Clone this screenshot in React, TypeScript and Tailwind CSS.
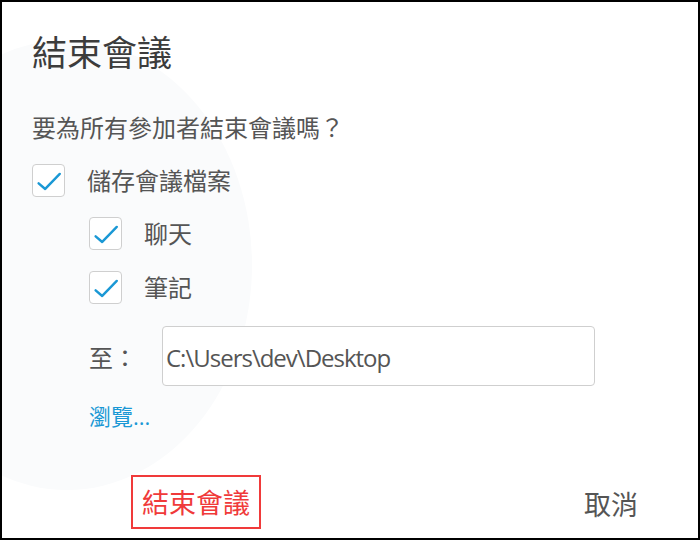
import { useState } from "react";

function Check({ checked, onToggle }: { checked: boolean; onToggle: () => void }) {
  return (
    <button
      onClick={onToggle}
      className="w-[33px] h-[33px] shrink-0 rounded-[4px] border-[1.5px] border-[#cfcfcf] bg-white flex items-center justify-center"
    >
      {checked && (
        <svg width="33" height="33" viewBox="0 0 33 33">
          <path
            d="M6 19.5 L13 25.5 L28.5 9.5"
            fill="none"
            stroke="#1a98d5"
            strokeWidth="2.6"
            strokeLinecap="round"
            strokeLinejoin="round"
          />
        </svg>
      )}
    </button>
  );
}

export default function App() {
  const [saveFiles, setSaveFiles] = useState(true);
  const [chat, setChat] = useState(true);
  const [notes, setNotes] = useState(true);
  const [path, setPath] = useState("C:\\Users\\dev\\Desktop");

  const font = "font-['Open_Sans','Noto_Sans_CJK_TC',sans-serif]";

  return (
    <div
      className={`relative w-[700px] h-[540px] overflow-hidden border-2 border-black bg-white text-[#555] ${font}`}
    >
      {/* faint background watermark */}
      <div className="absolute left-[-120px] top-[38px] w-[370px] h-[450px] rounded-[50%] bg-[#fafbfc]" />

      <div className="relative flex flex-col pl-[30px]">
        <h1 className="mt-[34px] h-[33px] leading-[33px] text-[35px] text-[#3c3c3c]">
          結束會議
        </h1>

        <p className="mt-[47px] h-[24px] leading-[24px] text-[24px]">
          要為所有參加者結束會議嗎？
        </p>

        {/* save meeting files */}
        <div className="mt-[24px] flex items-center gap-[22px]">
          <Check checked={saveFiles} onToggle={() => setSaveFiles(!saveFiles)} />
          <span className="text-[24px] leading-[24px]">儲存會議檔案</span>
        </div>

        <div className="ml-[57px] mt-[20px] flex items-center gap-[22px]">
          <Check checked={chat} onToggle={() => setChat(!chat)} />
          <span className="text-[24px] leading-[24px]">聊天</span>
        </div>

        <div className="ml-[57px] mt-[21px] flex items-center gap-[22px]">
          <Check checked={notes} onToggle={() => setNotes(!notes)} />
          <span className="text-[24px] leading-[24px]">筆記</span>
        </div>

        {/* destination */}
        <div className="ml-[57px] mt-[22px] flex items-center">
          <span className="w-[73px] text-[24px] leading-[24px] pt-[4px]">至：</span>
          <input
            value={path}
            onChange={(e) => setPath(e.target.value)}
            className="w-[433px] h-[60px] rounded-[4px] border-[1.5px] border-[#cfcfcf] bg-white pl-[3px] pt-[3px] text-[24px] tracking-[-1px] text-[#555] outline-none"
          />
        </div>

        <button className="ml-[57px] mt-[20px] self-start text-[22px] leading-[20px] text-[#1a98d5]">
          瀏覽...
        </button>

        {/* actions */}
        <div className="ml-[99px] mt-[49px] w-[507px] flex items-center justify-between">
          <button className="h-[54px] px-[9px] border-2 border-[#f03a3a] text-[27px] leading-[27px] text-[#f03a3a]">
            結束會議
          </button>
          <button className="h-[54px] pt-[4px] text-[27px] leading-[27px] text-[#555]">
            取消
          </button>
        </div>
      </div>
    </div>
  );
}
